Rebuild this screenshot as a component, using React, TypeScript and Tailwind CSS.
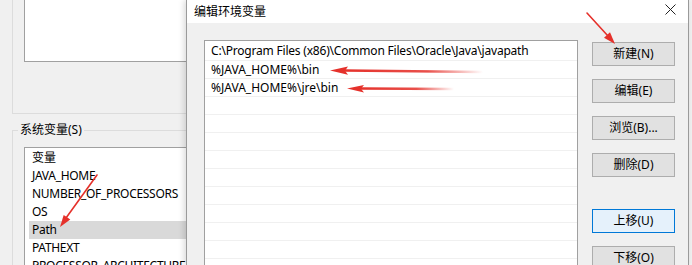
const font = { fontFamily: '"Noto Sans", "Noto Sans CJK SC", sans-serif' }

const sysVars = ['JAVA_HOME', 'NUMBER_OF_PROCESSORS', 'OS', 'Path', 'PATHEXT', 'PROCESSOR_ARCHITECTURE']

const paths = [
  'C:\\Program Files (x86)\\Common Files\\Oracle\\Java\\javapath',
  '%JAVA_HOME%\\bin',
  '%JAVA_HOME%\\jre\\bin',
  '',
  '',
  '',
  '',
  '',
  '',
  '',
  '',
  '',
  '',
]

const buttons = [
  { label: '新建(N)', mt: 'mt-[19px]' },
  { label: '编辑(E)', mt: 'mt-[13px]' },
  { label: '浏览(B)...', mt: 'mt-[13px]' },
  { label: '删除(D)', mt: 'mt-[13px]' },
  { label: '上移(U)', mt: 'mt-[32px]', focus: true },
  { label: '下移(O)', mt: 'mt-[13px]' },
]

function Arrows() {
  const red = '#e5312b'
  return (
    <svg className="pointer-events-none absolute inset-0" width="692" height="265" viewBox="0 0 692 265">
      <defs>
        <linearGradient id="fade2" gradientUnits="userSpaceOnUse" x1="344" y1="0" x2="483" y2="0">
          <stop offset="0" stopColor={red} />
          <stop offset="0.6" stopColor={red} stopOpacity="0.85" />
          <stop offset="1" stopColor={red} stopOpacity="0" />
        </linearGradient>
        <linearGradient id="fade3" gradientUnits="userSpaceOnUse" x1="360" y1="0" x2="454" y2="0">
          <stop offset="0" stopColor={red} />
          <stop offset="0.6" stopColor={red} stopOpacity="0.85" />
          <stop offset="1" stopColor={red} stopOpacity="0" />
        </linearGradient>
      </defs>

      {/* pointing at 新建 */}
      <line x1="587" y1="13" x2="608" y2="36" stroke={red} strokeWidth="1.6" strokeLinecap="round" />
      <polygon points="615,44 610,32.3 604,37.7" fill={red} />

      {/* %JAVA_HOME%\bin */}
      <line x1="344" y1="70.5" x2="483" y2="72" stroke="url(#fade2)" strokeWidth="2.6" />
      <polygon points="330,70.5 348,66.5 345,70.8 348,74.8" fill={red} />

      {/* %JAVA_HOME%\jre\bin */}
      <line x1="360" y1="88.5" x2="454" y2="89" stroke="url(#fade3)" strokeWidth="2.4" />
      <polygon points="347,88.5 364,85 361,88.8 364,92.4" fill={red} />

      {/* Path */}
      <line x1="97" y1="175" x2="66" y2="218" stroke={red} strokeWidth="1.6" strokeLinecap="round" />
      <polygon points="60,227 70.3,219.5 63.7,214.9" fill={red} />
    </svg>
  )
}

export default function App() {
  return (
    <div className="relative flex h-[265px] w-[692px] overflow-hidden bg-[#f0f0f0] text-[12px] text-black" style={font}>
      {/* Environment variables window behind */}
      <div className="w-[186px] shrink-0 overflow-hidden">
        <div className="ml-[12px] h-[114px] w-[200px] border-b border-l border-[#dcdcdc]">
          <div className="ml-[11px] h-[62px] border-b border-l border-[#a0a0a0] bg-white" />
        </div>
        <fieldset className="mt-[8px] ml-[12px] h-[200px] w-[200px] border-l border-t border-[#dcdcdc]">
          <legend className="ml-[5px] px-[2px] leading-[16px]">系统变量(S)</legend>
          <div className="ml-[11px] mt-[9px] border-l border-t border-[#a0a0a0] bg-white pl-[4px]">
            <div className="flex h-[19px] items-center pl-[3px] leading-none">变量</div>
            {sysVars.map((v) => (
              <div
                key={v}
                className={`flex h-[18px] items-center whitespace-nowrap pl-[3px] leading-none tracking-[-0.3px] ${v === 'Path' ? 'bg-[#d9d9d9]' : ''}`}
              >
                {v}
              </div>
            ))}
          </div>
        </fieldset>
      </div>

      {/* Edit environment variable dialog */}
      <div className="flex w-[503px] shrink-0 flex-col border-l border-r border-[#9a9a9a] shadow-[-2px_0_6px_rgba(0,0,0,0.15)]">
        <div className="flex h-[23px] shrink-0 items-center justify-between bg-white pl-[7px] pr-[12px]">
          <span className="leading-none">编辑环境变量</span>
          <svg width="11" height="11" viewBox="0 0 11 11" className="-mt-[4px]">
            <path d="M0.5 0.5L10.5 10.5M10.5 0.5L0.5 10.5" stroke="#222" strokeWidth="1" />
          </svg>
        </div>
        <div className="flex flex-1 bg-[#f0f0f0]">
          <div className="ml-[17px] mt-[17px] w-[374px] shrink-0 border-l border-r border-t border-[#a0a0a0] bg-white">
            {paths.map((p, i) => (
              <div
                key={i}
                className={`flex items-center whitespace-nowrap border-b border-[#f0f0f0] pl-[6px] leading-none ${
                  i === 0 ? 'h-[20px] tracking-[-0.2px]' : 'h-[18px]'
                }`}
              >
                {p}
              </div>
            ))}
          </div>
          <div className="ml-[14px] flex flex-col">
            {buttons.map((b) => (
              <div
                key={b.label}
                className={`${b.mt} flex h-[24px] w-[83px] shrink-0 items-center justify-center border leading-none ${
                  b.focus ? 'border-[#0078d7] bg-[#e5f1fb]' : 'border-[#adadad] bg-[#e1e1e1]'
                }`}
              >
                {b.label}
              </div>
            ))}
          </div>
        </div>
      </div>

      <Arrows />
    </div>
  )
}
